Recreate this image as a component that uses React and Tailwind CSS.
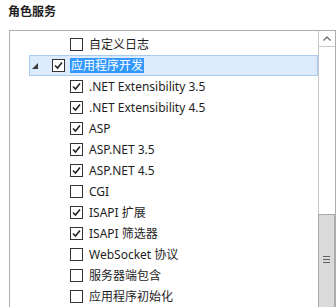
import React from "react";

const Check = () => (
  <svg width="9" height="9" viewBox="0 0 9 9" className="block">
    <path d="M1 4.5 L3.5 7 L8 1.5" fill="none" stroke="#222" strokeWidth="1.6" />
  </svg>
);

const Box = ({ checked }) => (
  <div className="w-[13px] h-[13px] border border-[#333] bg-white flex items-center justify-center shrink-0">
    {checked && <Check />}
  </div>
);

const rows = [
  { label: "自定义日志", checked: false, level: 1 },
  { label: "应用程序开发", checked: true, level: 0, parent: true },
  { label: ".NET Extensibility 3.5", checked: true, level: 1 },
  { label: ".NET Extensibility 4.5", checked: true, level: 1 },
  { label: "ASP", checked: true, level: 1 },
  { label: "ASP.NET 3.5", checked: true, level: 1 },
  { label: "ASP.NET 4.5", checked: true, level: 1 },
  { label: "CGI", checked: false, level: 1 },
  { label: "ISAPI 扩展", checked: true, level: 1 },
  { label: "ISAPI 筛选器", checked: true, level: 1 },
  { label: "WebSocket 协议", checked: false, level: 1 },
  { label: "服务器端包含", checked: false, level: 1 },
  { label: "应用程序初始化", checked: false, level: 1 },
];

export default function App() {
  return (
    <div
      className="w-[336px] h-[307px] overflow-hidden bg-white text-[#1e1e1e]"
      style={{ fontFamily: '"Noto Sans", "Noto Sans CJK SC", sans-serif' }}
    >
      <div className="pl-[8px] pt-[3px] h-[30px] text-[12px] font-semibold leading-[18px]">角色服务</div>
      <div className="ml-[9px] h-[290px] border border-[#adadad] flex">
        <div className="flex-1 pt-[3px] flex flex-col">
          {rows.map((r, i) =>
            r.parent ? (
              <div
                key={i}
                className="h-[21px] ml-[19px] border border-[#a9cbee] bg-[#dbeafd] flex items-center"
              >
                <svg width="6" height="6" viewBox="0 0 6 6" className="ml-[2px] mr-[14px]">
                  <path d="M6 0 L6 6 L0 6 Z" fill="#3c3c3c" />
                </svg>
                <Box checked />
                <span className="ml-[5px] bg-[#3399ff] text-white text-[12px] leading-[15px] px-[1px]">
                  {r.label}
                </span>
              </div>
            ) : (
              <div key={i} className="h-[21px] flex items-center pl-[60px]">
                <Box checked={r.checked} />
                <span className="ml-[6px] text-[12px] leading-[15px] whitespace-nowrap">{r.label}</span>
              </div>
            )
          )}
        </div>
        <div className="w-[17px] border-l border-[#c8c8c8] flex flex-col">
          <div className="h-[16px] border-b border-[#c8c8c8] flex items-center justify-center">
            <svg width="8" height="5" viewBox="0 0 8 5">
              <path d="M0.5 4.5 L4 1 L7.5 4.5" fill="none" stroke="#606060" strokeWidth="1.2" />
            </svg>
          </div>
          <div className="h-[167px]" />
          <div className="flex-1 bg-[#dadada] border border-[#a8a8a8] -ml-px flex flex-col items-center pt-[41px] gap-[2px]">
            <div className="w-[7px] h-px bg-[#606060]" />
            <div className="w-[7px] h-px bg-[#606060]" />
            <div className="w-[7px] h-px bg-[#606060]" />
          </div>
        </div>
      </div>
    </div>
  );
}
